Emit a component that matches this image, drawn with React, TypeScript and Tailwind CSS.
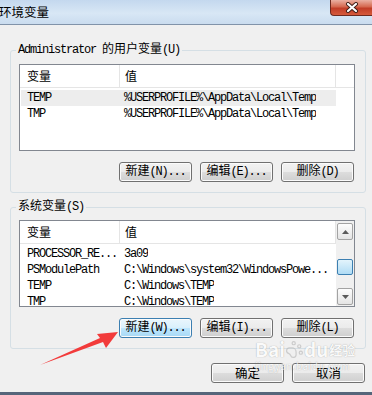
import { PawPrint } from "lucide-react";

const mono = "font-['Liberation_Mono','Noto_Sans_CJK_SC',monospace]";
const sans = "font-['Noto_Sans_CJK_SC','Noto_Sans',sans-serif]";

type Row = { name: string; value: string };

const userVars: Row[] = [
  { name: "TEMP", value: "%USERPROFILE%\\AppData\\Local\\Temp" },
  { name: "TMP", value: "%USERPROFILE%\\AppData\\Local\\Temp" },
];

const systemVars: Row[] = [
  { name: "PROCESSOR_RE...", value: "3a09" },
  { name: "PSModulePath", value: "C:\\Windows\\system32\\WindowsPowe..." },
  { name: "TEMP", value: "C:\\Windows\\TEMP" },
  { name: "TMP", value: "C:\\Windows\\TEMP" },
];

// ascii runs get squeezed to the 6px cell of the bitmap font
function Mixed({ text }: { text: string }) {
  const parts = text.split(/([\x00-\x7f]+)/).filter(Boolean);
  return (
    <>
      {parts.map((p, i) =>
        /^[\x00-\x7f]+$/.test(p) ? (
          <span key={i} className="tracking-[-1.2px]">
            {p}
          </span>
        ) : (
          <span key={i}>{p}</span>
        )
      )}
    </>
  );
}

function WinButton({ label, focused }: { label: string; focused?: boolean }) {
  return (
    <button
      type="button"
      className={`flex h-[20px] w-[73px] items-center justify-center rounded-[3px] border text-[12px] leading-[18px] shadow-[inset_0_0_0_1px_#fbfbfb] ${mono} ${
        focused
          ? "border-[#3c7fb1] bg-[linear-gradient(to_bottom,#eaf6fd_0%,#d9f0fc_50%,#bee6fd_50%,#a7d9f5_100%)]"
          : "border-[#707070] bg-[linear-gradient(to_bottom,#f2f2f2_0%,#ebebeb_50%,#dddddd_50%,#cfcfcf_100%)]"
      }`}
    >
      <Mixed text={label} />
    </button>
  );
}

function Header({ full }: { full?: boolean }) {
  return (
    <div className="flex h-[23px] border-b border-[#e5e5e5] bg-white text-[12px] leading-[22px]">
      <div className={`w-[100px] border-r border-[#e5e5e5] pl-[7px] ${sans}`}>变量</div>
      <div className={`w-[216px] border-r border-[#e5e5e5] pl-[5px] ${sans}`}>值</div>
      {full ? <div className="flex-1" /> : null}
    </div>
  );
}

function Rows({ rows, selected }: { rows: Row[]; selected?: number }) {
  return (
    <div className="mt-[2px]">
      {rows.map((r, i) => (
        <div
          key={r.name}
          className={`ml-[1px] flex h-[16px] w-[315px] text-[12px] leading-[16px] ${mono} ${
            i === selected ? "bg-[#ededed]" : ""
          }`}
        >
          <div className="w-[99px] overflow-hidden whitespace-nowrap pl-[6px]">
            <Mixed text={r.name} />
          </div>
          <div className="overflow-hidden whitespace-nowrap pl-[4px]">
            <Mixed text={r.value} />
          </div>
        </div>
      ))}
    </div>
  );
}

function ScrollArrow({ up }: { up?: boolean }) {
  return (
    <div className="flex h-[17px] items-center justify-center rounded-[2px] border border-[#a3a3a3] bg-[linear-gradient(to_bottom,#fdfdfd,#e4e4e4)]">
      <svg width="7" height="4" viewBox="0 0 7 4">
        <path d={up ? "M0 4 L3.5 0 L7 4 Z" : "M0 0 L3.5 4 L7 0 Z"} fill="#5a5a5a" />
      </svg>
    </div>
  );
}

function GroupBox({ label, children, className }: { label: string; children: React.ReactNode; className: string }) {
  return (
    <div className={`relative ml-[10px] w-[356px] rounded-[3px] border border-[#d5dfe5] px-[8px] pb-[10px] ${className}`}>
      <span className={`absolute -top-[8px] left-[5px] bg-[#f0f0f0] px-[2px] text-[12px] leading-[14px] ${mono}`}>
        <Mixed text={label} />
      </span>
      {children}
    </div>
  );
}

export default function App() {
  return (
    <div className="relative h-[395px] w-[372px] overflow-hidden bg-[#f0f0f0] text-black">
      {/* title bar */}
      <div className="flex h-[25px] items-start justify-between border-b border-[#8193a9] bg-[linear-gradient(to_bottom,#c4d8ee,#d8e7f5_55%,#cadcef)]">
        <span className={`-ml-[1px] mt-[4px] text-[12.5px] leading-[16px] ${sans}`}>环境变量</span>
        <div className="flex h-[16px] w-[42px] items-center justify-center rounded-bl-[4px] border-b border-l border-[#6e2a1f] bg-[linear-gradient(to_bottom,#eab0a2,#d5684f_45%,#c13d27_55%,#d65a3b)]">
          <svg width="14" height="11" viewBox="0 0 14 11">
            <path d="M3 2 L11 9 M11 2 L3 9" stroke="#3b1c16" strokeWidth="4" strokeLinecap="round" />
            <path d="M3 2 L11 9 M11 2 L3 9" stroke="#ffffff" strokeWidth="2.2" strokeLinecap="round" />
          </svg>
        </div>
      </div>

      {/* user variables */}
      <GroupBox label="Administrator 的用户变量(U)" className="mt-[25px] pt-[13px]">
        <div className="h-[87px] w-[336px] border border-[#828790] bg-white">
          <Header full />
          <Rows rows={userVars} selected={0} />
        </div>
        <div className="mt-[11px] flex w-[336px] justify-end gap-[8px] pr-[1px]">
          <WinButton label="新建(N)..." />
          <WinButton label="编辑(E)..." />
          <WinButton label="删除(D)" />
        </div>
      </GroupBox>

      {/* system variables */}
      <GroupBox label="系统变量(S)" className="mt-[14px] pt-[12px]">
        <div className="flex h-[87px] w-[336px] border border-[#828790] bg-white">
          <div className="w-[316px] overflow-hidden">
            <Header />
            <Rows rows={systemVars} />
          </div>
          <div className="flex w-[18px] flex-col bg-[#f0f0f0] px-[1px] pb-[1px] pt-[2px]">
            <ScrollArrow up />
            <div className="mt-[19px] h-[16px] rounded-[2px] border border-[#3c7fb1] bg-[linear-gradient(to_bottom,#e3f4fc,#b0dcf5)]" />
            <div className="flex-1" />
            <ScrollArrow />
          </div>
        </div>
        <div className="mt-[11px] flex w-[336px] justify-end gap-[8px] pr-[1px]">
          <WinButton label="新建(W)..." focused />
          <WinButton label="编辑(I)..." />
          <WinButton label="删除(L)" />
        </div>
      </GroupBox>

      {/* dialog buttons */}
      <div className="ml-[10px] mt-[14px] flex w-[356px] justify-end gap-[8px] pr-[1px]">
        <button
          type="button"
          className={`h-[20px] w-[73px] rounded-[3px] border border-[#707070] bg-[linear-gradient(to_bottom,#f2f2f2_0%,#ebebeb_50%,#dddddd_50%,#cfcfcf_100%)] text-[12.5px] leading-[18px] shadow-[inset_0_0_0_1px_#fbfbfb] ${sans}`}
        >
          确定
        </button>
        <button
          type="button"
          className={`h-[20px] w-[73px] rounded-[3px] border border-[#707070] bg-[linear-gradient(to_bottom,#f2f2f2_0%,#ebebeb_50%,#dddddd_50%,#cfcfcf_100%)] text-[12.5px] leading-[18px] shadow-[inset_0_0_0_1px_#fbfbfb] ${sans}`}
        >
          取消
        </button>
      </div>

      <div className="mt-[9px] h-[3px] bg-[#56657a]" />

      {/* red annotation arrow */}
      <svg className="pointer-events-none absolute inset-0" width="372" height="395" viewBox="0 0 372 395">
        <polygon points="118,332 97,334 100,338 40,365 103,342 106,348" fill="#f23b3b" />
      </svg>

      {/* watermark */}
      <div className={`pointer-events-none absolute left-[255px] top-[339px] text-white opacity-70 [text-shadow:0_0_1px_#7a7a7a] ${sans}`}>
        <div className="flex items-end leading-none">
          <span className="text-[19px] font-bold">Bai</span>
          <PawPrint size={19} strokeWidth={1.5} className="-mb-[1px] text-[#bdbdbd]" />
          <span className="text-[19px] font-bold">du</span>
          <span className="mb-[2px] ml-[1px] text-[13px] font-bold">经验</span>
        </div>
        <div className="mt-[3px] text-[10px] leading-none tracking-[0.5px]">jingyan.baidu.com</div>
      </div>
    </div>
  );
}
